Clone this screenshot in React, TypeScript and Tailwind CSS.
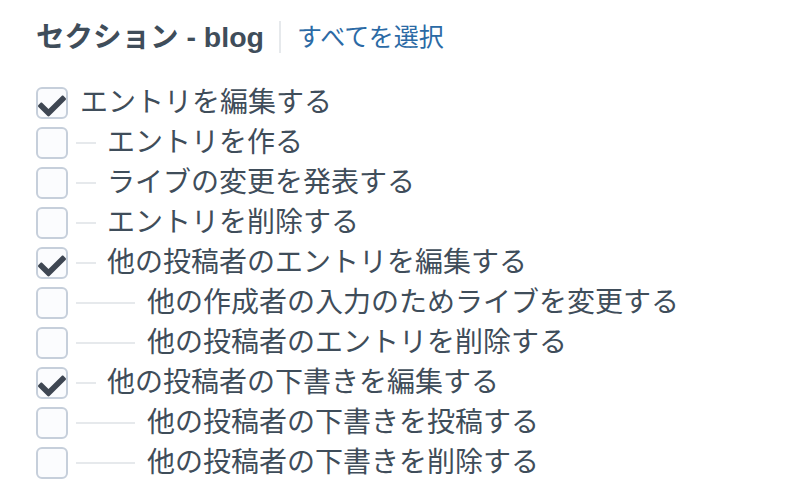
import React from 'react'

interface Permission {
  label: string
  checked: boolean
  level: 0 | 1 | 2
}

const permissions: Permission[] = [
  { label: 'エントリを編集する', checked: true, level: 0 },
  { label: 'エントリを作る', checked: false, level: 1 },
  { label: 'ライブの変更を発表する', checked: false, level: 1 },
  { label: 'エントリを削除する', checked: false, level: 1 },
  { label: '他の投稿者のエントリを編集する', checked: true, level: 1 },
  { label: '他の作成者の入力のためライブを変更する', checked: false, level: 2 },
  { label: '他の投稿者のエントリを削除する', checked: false, level: 2 },
  { label: '他の投稿者の下書きを編集する', checked: true, level: 1 },
  { label: '他の投稿者の下書きを投稿する', checked: false, level: 2 },
  { label: '他の投稿者の下書きを削除する', checked: false, level: 2 },
]

const font = { fontFamily: '"Liberation Sans", "Noto Sans CJK JP", sans-serif' }

const Checkbox: React.FC<{ checked: boolean }> = ({ checked }) => (
  <span className="relative flex h-[32px] w-[32px] shrink-0 items-center justify-center rounded-[6px] border-2 border-[#c6cfdb] bg-[#fbfcfe]">
    {checked && (
      <svg className="mt-[6px] h-[28px] w-[28px]" viewBox="0 0 512 512">
        <path
          fill="#3f4753"
          d="M173.898 439.404l-166.4-166.4c-9.997-9.997-9.997-26.206 0-36.204l36.203-36.204c9.997-9.998 26.207-9.998 36.204 0L192 312.69 432.095 72.596c9.997-9.997 26.207-9.997 36.204 0l36.203 36.204c9.997 9.997 9.997 26.206 0 36.204l-294.4 294.401c-9.998 9.997-26.207 9.997-36.204-.001z"
        />
      </svg>
    )}
  </span>
)

const PermissionRow: React.FC<{ item: Permission }> = ({ item }) => (
  <li className="flex h-[40px] items-center">
    <Checkbox checked={item.checked} />
    {item.level === 0 && <span className="w-[12px]" />}
    {item.level === 1 && <span className="ml-[8px] mr-[11px] h-[2px] w-[20px] bg-[#e6e9ec]" />}
    {item.level === 2 && <span className="ml-[8px] mr-[12px] h-[2px] w-[59px] bg-[#e6e9ec]" />}
    <span className="whitespace-nowrap text-[28px] leading-[40px] text-[#3f4d5a]">{item.label}</span>
  </li>
)

export default function App() {
  return (
    <div className="min-h-screen bg-white pl-[36px] pt-[17px]" style={font}>
      <div className="flex h-[40px] items-center">
        <h3 className="whitespace-nowrap text-[28.5px] font-bold leading-[40px] text-[#3f4d5a]">
          セクション - blog
        </h3>
        <span className="ml-[15px] mr-[16px] h-[32px] w-[2px] bg-[#e6e9ec]" />
        <a className="whitespace-nowrap text-[25px] leading-[40px] text-[#2b6aa5]" href="#">
          すべてを選択
        </a>
      </div>
      <ul className="mt-[26px]">
        {permissions.map((item) => (
          <PermissionRow key={item.label} item={item} />
        ))}
      </ul>
    </div>
  )
}
